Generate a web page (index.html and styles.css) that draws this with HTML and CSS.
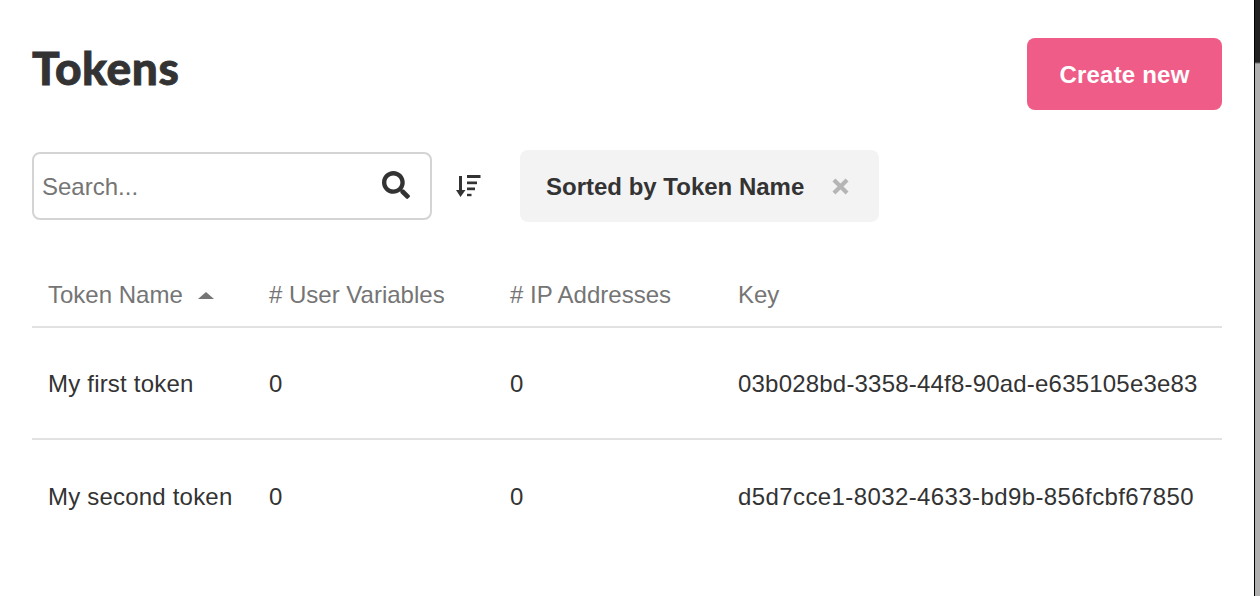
FILE: index.html
```html
<!DOCTYPE html>
<html lang="en">
<head>
    <meta charset="UTF-8">
    <title>Tokens</title>
    <link rel="stylesheet" href="styles.css">
</head>
<body>
    <div class="page">
        <!-- title and button -->
        <div class="header">
            <h1 class="title">Tokens</h1>
            <a class="btn-create" href="#">Create new</a>
        </div>

        <!-- search and sort -->
        <div class="toolbar">
            <div class="search">
                <input class="search-input" type="text" placeholder="Search...">
                <svg class="search-icon" viewBox="0 0 512 512"><path d="M505 442.700L405.300 343c-4.500-4.500-10.600-7-17-7H372c27.600-35.300 44-79.700 44-128C416 93.100 322.900 0 208 0S0 93.100 0 208s93.100 208 208 208c48.300 0 92.700-16.400 128-44v16.300c0 6.400 2.500 12.500 7 17l99.700 99.700c9.400 9.400 24.600 9.400 33.900 0l28.300-28.300c9.400-9.400 9.400-24.600.1-34zM208 336c-70.700 0-128-57.200-128-128 0-70.700 57.200-128 128-128 70.700 0 128 57.200 128 128 0 70.700-57.200 128-128 128z"/></svg>
            </div>
            <svg class="sort-icon" viewBox="0 0 26 24">
                <path d="M4 2h3v14h3.500L5.500 23 1 16h3z"/>
                <rect x="12" y="1" width="13.500" height="3"/>
                <rect x="12" y="7.500" width="10" height="2.700"/>
                <rect x="12" y="13.500" width="8" height="2.700"/>
                <rect x="12" y="19.800" width="4.500" height="2.400"/>
            </svg>
            <div class="chip">
                <span class="chip-text">Sorted by Token Name</span>
                <svg class="chip-close" viewBox="0 0 16 16"><path d="M2.500 2.500l11 11M13.500 2.500l-11 11"/></svg>
            </div>
        </div>

        <!-- token list -->
        <table class="tokens">
            <thead>
                <tr>
                    <th class="col-name">Token Name<span class="arrow"></span></th>
                    <th class="col-vars"># User Variables</th>
                    <th class="col-ips"># IP Addresses</th>
                    <th>Key</th>
                </tr>
            </thead>
            <tbody>
                <tr>
                    <td>My first token</td>
                    <td>0</td>
                    <td>0</td>
                    <td>03b028bd-3358-44f8-90ad-e635105e3e83</td>
                </tr>
                <tr>
                    <td>My second token</td>
                    <td>0</td>
                    <td>0</td>
                    <td class="key-wide">d5d7cce1-8032-4633-bd9b-856fcbf67850</td>
                </tr>
            </tbody>
        </table>
    </div>
    <div class="edge"></div>
</body>
</html>
```

FILE: styles.css
```css
*{
    margin: 0;
    padding: 0;
    box-sizing: border-box;
}

html, body{
    height: 100%;
    overflow: hidden;
}

body{
    background-color: #fff;
    color: #333;
    font-family: "Liberation Sans", Arial, sans-serif;
    display: flex;
    justify-content: space-between;
}

.page{
    width: 1190px;
    margin-left: 32px;
    padding-top: 38px;
}

/* title and button */
.header{
    display: flex;
    justify-content: space-between;
    align-items: flex-start;
    height: 72px;
}

.title{
    font-family: Lato, "Liberation Sans", sans-serif;
    font-size: 46px;
    font-weight: 900;
    line-height: 60px;
    letter-spacing: 0.6px;
    -webkit-text-stroke: 0.8px #333;
    color: #333;
}

.btn-create{
    width: 195px;
    height: 72px;
    line-height: 74px;
    text-align: center;
    background-color: #ef5c87;
    border-radius: 8px;
    color: #fff;
    font-size: 24px;
    font-weight: 700;
    letter-spacing: 0.2px;
    text-decoration: none;
}

/* search and sort */
.toolbar{
    display: flex;
    align-items: center;
    height: 72px;
    margin-top: 40px;
}

.search{
    width: 400px;
    height: 68px;
    display: flex;
    align-items: center;
    padding: 2px 20px 0 8px;
    border: 2px solid #d4d4d4;
    border-radius: 8px;
}

.search-input{
    flex: 1;
    min-width: 0;
    border: 0;
    outline: 0;
    font-family: "Liberation Sans", Arial, sans-serif;
    font-size: 24px;
}

.search-input::placeholder{
    color: #757575;
    opacity: 1;
}

.search-icon{
    width: 28px;
    height: 28px;
    margin-top: -4px;
    fill: #333;
}

.sort-icon{
    width: 26px;
    height: 24px;
    margin-left: 23px;
    fill: #333;
}

.chip{
    display: flex;
    align-items: center;
    width: 359px;
    height: 72px;
    margin-left: 39px;
    padding: 1px 0 0 26px;
    background-color: #f3f3f3;
    border-radius: 8px;
}

.chip-text{
    font-size: 24px;
    font-weight: 700;
    color: #333;
}

.chip-close{
    width: 19px;
    height: 19px;
    margin-left: 27px;
    fill: none;
    stroke: #b5b5b5;
    stroke-width: 3.500;
}

/* token list */
.tokens{
    width: 100%;
    margin-top: 39px;
    border-collapse: collapse;
    table-layout: fixed;
    font-size: 24px;
}

.tokens th{
    height: 66px;
    padding: 2px 0 0 16px;
    border-bottom: 2px solid #e2e2e2;
    text-align: left;
    font-weight: 400;
    color: #757575;
}

.tokens td{
    height: 112px;
    padding: 2px 0 0 16px;
    border-bottom: 2px solid #e2e2e2;
    color: #333;
    white-space: nowrap;
    letter-spacing: 0.2px;
}

.tokens tbody tr:last-child td{
    border-bottom: 0;
}

.tokens td.key-wide{
    letter-spacing: 0.4px;
}

.col-name{
    width: 221px;
}

.col-vars{
    width: 241px;
}

.col-ips{
    width: 228px;
}

.arrow{
    display: inline-block;
    margin-left: 15px;
    vertical-align: 4px;
    border-left: 8px solid transparent;
    border-right: 8px solid transparent;
    border-bottom: 7px solid #757575;
}

/* window edge: black line with the scrollbar strip */
.edge{
    width: 6px;
    height: 100%;
    border-left: 1px solid #000;
    background: linear-gradient(#222 0, #222 62px, #b0b0b0 64px);
}
```
